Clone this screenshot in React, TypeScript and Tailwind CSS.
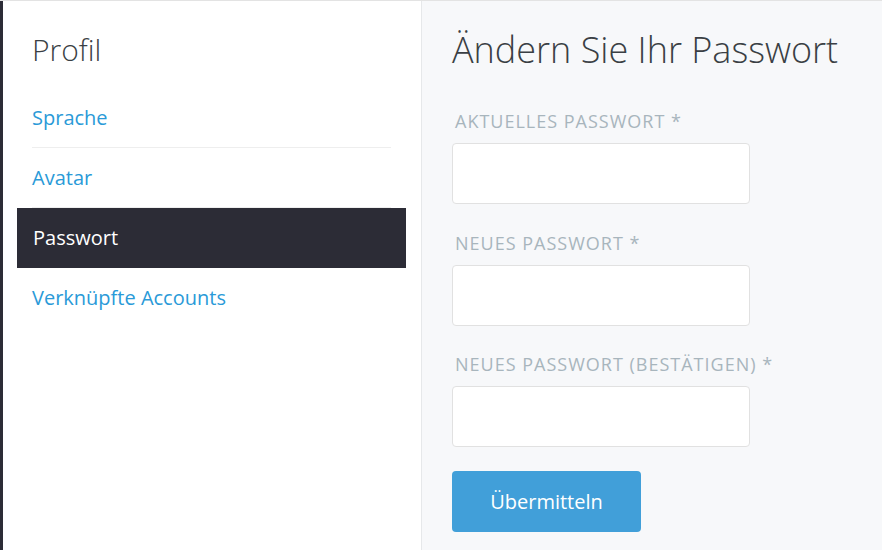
import React from 'react';

const navItems = ['Sprache', 'Avatar', 'Passwort', 'Verknüpfte Accounts'];
const active = 'Passwort';

const fields = [
  'Aktuelles Passwort *',
  'Neues Passwort *',
  'Neues Passwort (bestätigen) *',
];

export default function App() {
  return (
    <div
      className="flex h-[550px] w-[882px] overflow-hidden border-t border-[#e3e3e3] bg-white"
      style={{ fontFamily: '"Open Sans", "Noto Sans", sans-serif' }}
    >
      <div className="w-[3px] shrink-0 bg-[#2c2c36]" />

      {/* sidebar */}
      <aside className="w-[419px] shrink-0 border-r border-[#e6e8ea] bg-white pl-[29px] pr-[30px] pt-[29px]">
        <h2 className="text-[30px] leading-[40px] font-light text-[#3a3f44]">Profil</h2>
        <ul className="mt-[18px]">
          {navItems.map((item, i) => {
            const isActive = item === active;
            const last = i === navItems.length - 1;
            return (
              <li
                key={item}
                className={
                  isActive
                    ? '-mx-[15px] flex h-[60px] items-center bg-[#2c2c36] px-[16px] text-[20px] text-white'
                    : `flex h-[60px] items-center text-[20px] text-[#2a9ad8] ${last ? '' : 'border-b border-[#eeeeee]'}`
                }
              >
                {item}
              </li>
            );
          })}
        </ul>
      </aside>

      {/* main */}
      <main className="flex-1 bg-[#f7f8fa] pl-[30px] pt-[25px]">
        <h1 className="text-[36px] leading-[48px] font-light text-[#3a3f44]">Ändern Sie Ihr Passwort</h1>
        <form className="mt-[35px] flex flex-col" onSubmit={(e) => e.preventDefault()}>
          {fields.map((label, i) => (
            <div
              key={label}
              className={i === 0 ? 'mb-[27px]' : i === 1 ? 'mb-[26px]' : 'mb-[24px]'}
            >
              <label className="block pl-[3px] text-[18px] leading-[24px] tracking-[1px] uppercase text-[#a8b5bd]">
                {label}
              </label>
              <input
                type="password"
                className="mt-[10px] block h-[61px] w-[298px] rounded-[4px] border border-[#e1e1e1] bg-white"
              />
            </div>
          ))}
          <button
            type="submit"
            className="h-[61px] w-[189px] rounded-[4px] bg-[#419fd9] text-[20px] text-white"
          >
            Übermitteln
          </button>
        </form>
      </main>
    </div>
  );
}
